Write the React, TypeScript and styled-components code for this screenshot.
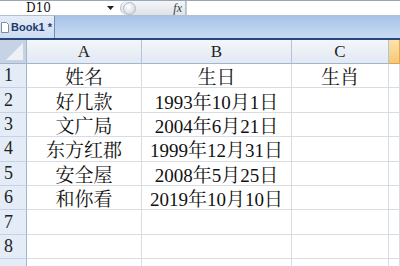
import React, {FC} from 'react'
import styled, {createGlobalStyle} from 'styled-components'

const GlobalStyle = createGlobalStyle`
body {
  margin:0;
  background:#fff;
  overflow:hidden;
}
`

const Window = styled.div`
width:400px;
height:266px;
overflow:hidden;
display:flex;
flex-direction:column;
`

const FormulaBar = styled.div`
height:14px;
display:flex;
border-top:1px solid #9aa6b6;
border-bottom:1px solid #b5bfcc;
background:#fff;
`

const NameBox = styled.div`
width:120px;
display:flex;
align-items:center;
span {
  flex:1;
  text-align:center;
  padding-right:30px;
  font-family:"DejaVu Serif", "Liberation Serif", serif;
  font-size:12px;
  color:#111;
}
svg {
  width:7px;
  height:4px;
  margin-right:6px;
}
`

const FxGroup = styled.div`
width:66px;
display:flex;
align-items:center;
justify-content:space-between;
background:linear-gradient(#f4f6f9, #dde3ea);
border:1px solid #b6bfca;
border-top:none;
border-bottom:none;
border-radius:7px 0 0 7px;
box-sizing:border-box;
padding:0 3px 0 2px;
.knob {
  width:11px;
  height:11px;
  border-radius:50%;
  background:radial-gradient(circle at 40% 35%, #fff, #c9d0d9);
  border:1px solid #b0b9c4;
}
i {
  font:italic 12px "Liberation Serif", serif;
  color:#3a3a3a;
}
`

const FormulaInput = styled.div`
flex:1;
border-left:1px solid #c6ccd4;
`

const TabBar = styled.div`
height:22px;
display:flex;
align-items:stretch;
background:linear-gradient(#a7c2e7, #bcd2ef 60%, #c8daf1);
border-bottom:2px solid #24467b;
`

const Tab = styled.div`
width:55px;
display:flex;
align-items:center;
gap:2px;
padding-left:1px;
box-sizing:border-box;
background:linear-gradient(#e4ecf8, #cddcf1);
border-right:1px solid #6f8db8;
font:bold 11px "Liberation Sans", Arial, sans-serif;
color:#1d3a6b;
svg {
  width:8px;
  height:11px;
}
`

const Sheet = styled.div`
flex:1;
display:grid;
grid-template-columns:27px 115px 150px 97px 1fr;
grid-template-rows:24px repeat(9, 24.4px);
overflow:hidden;
`

const Corner = styled.div`
background:#c7d3e4;
border-right:1px solid #9eb6ce;
border-bottom:1px solid #9eb6ce;
position:relative;
&::after {
  content:'';
  position:absolute;
  right:3px;
  bottom:3px;
  width:0;
  height:0;
  border-left:17px solid transparent;
  border-bottom:17px solid #eef1f5;
}
`

const ColHead = styled.div<{selected?: boolean}>`
display:flex;
align-items:center;
justify-content:center;
background:${p => p.selected
  ? 'linear-gradient(#fbe3ae, #f7c874)'
  : 'linear-gradient(#f3f6fa, #e2e9f3)'};
border-right:1px solid ${p => p.selected ? '#e8a84a' : '#b3c4d8'};
border-bottom:1px solid ${p => p.selected ? '#e0a44c' : '#9eb6ce'};
font:17px "Liberation Serif", serif;
color:#222;
`

const RowHead = styled.div`
display:flex;
align-items:center;
padding-left:4px;
background:#e4ecf7;
border-right:1px solid #9eb6ce;
border-bottom:1px solid #c5d2e3;
font:18px "Liberation Serif", serif;
color:#222;
`

const Cell = styled.div`
display:flex;
align-items:center;
justify-content:center;
white-space:nowrap;
border-right:1px solid #d8dde3;
border-bottom:1px solid #d8dde3;
font:19px "Liberation Serif", "Noto Serif CJK SC", "Noto Sans CJK SC", serif;
color:#111;
`

const rows: string[][] = [
  ['姓名', '生日', '生肖'],
  ['好几款', '1993年10月1日', ''],
  ['文广局', '2004年6月21日', ''],
  ['东方红郡', '1999年12月31日', ''],
  ['安全屋', '2008年5月25日', ''],
  ['和你看', '2019年10月10日', ''],
  ['', '', ''],
  ['', '', ''],
  ['', '', ''],
]

const App: FC = () => {
  return (
    <Window>
      <GlobalStyle />
      <FormulaBar>
        <NameBox>
          <span>D10</span>
          <svg viewBox='0 0 7 4'><path d='M0 0h7L3.5 4z' fill='#222' /></svg>
        </NameBox>
        <FxGroup>
          <div className='knob' />
          <i>fx</i>
        </FxGroup>
        <FormulaInput />
      </FormulaBar>
      <TabBar>
        <Tab>
          <svg viewBox='0 0 8 11'>
            <path d='M0.5 0.5h5l2 2v8h-7z' fill='#fff' stroke='#7b8ca3' />
          </svg>
          <span>Book1 *</span>
        </Tab>
      </TabBar>
      <Sheet>
        <Corner />
        <ColHead>A</ColHead>
        <ColHead>B</ColHead>
        <ColHead>C</ColHead>
        <ColHead selected />
        {rows.map((r, i) => (
          <React.Fragment key={i}>
            {/* the 9th row is only a sliver at the bottom edge, its number is out of view */}
            <RowHead>{i < 8 ? i + 1 : ''}</RowHead>
            {r.map((v, j) => <Cell key={j}>{v}</Cell>)}
            <Cell />
          </React.Fragment>
        ))}
      </Sheet>
    </Window>
  )
}

export default App
